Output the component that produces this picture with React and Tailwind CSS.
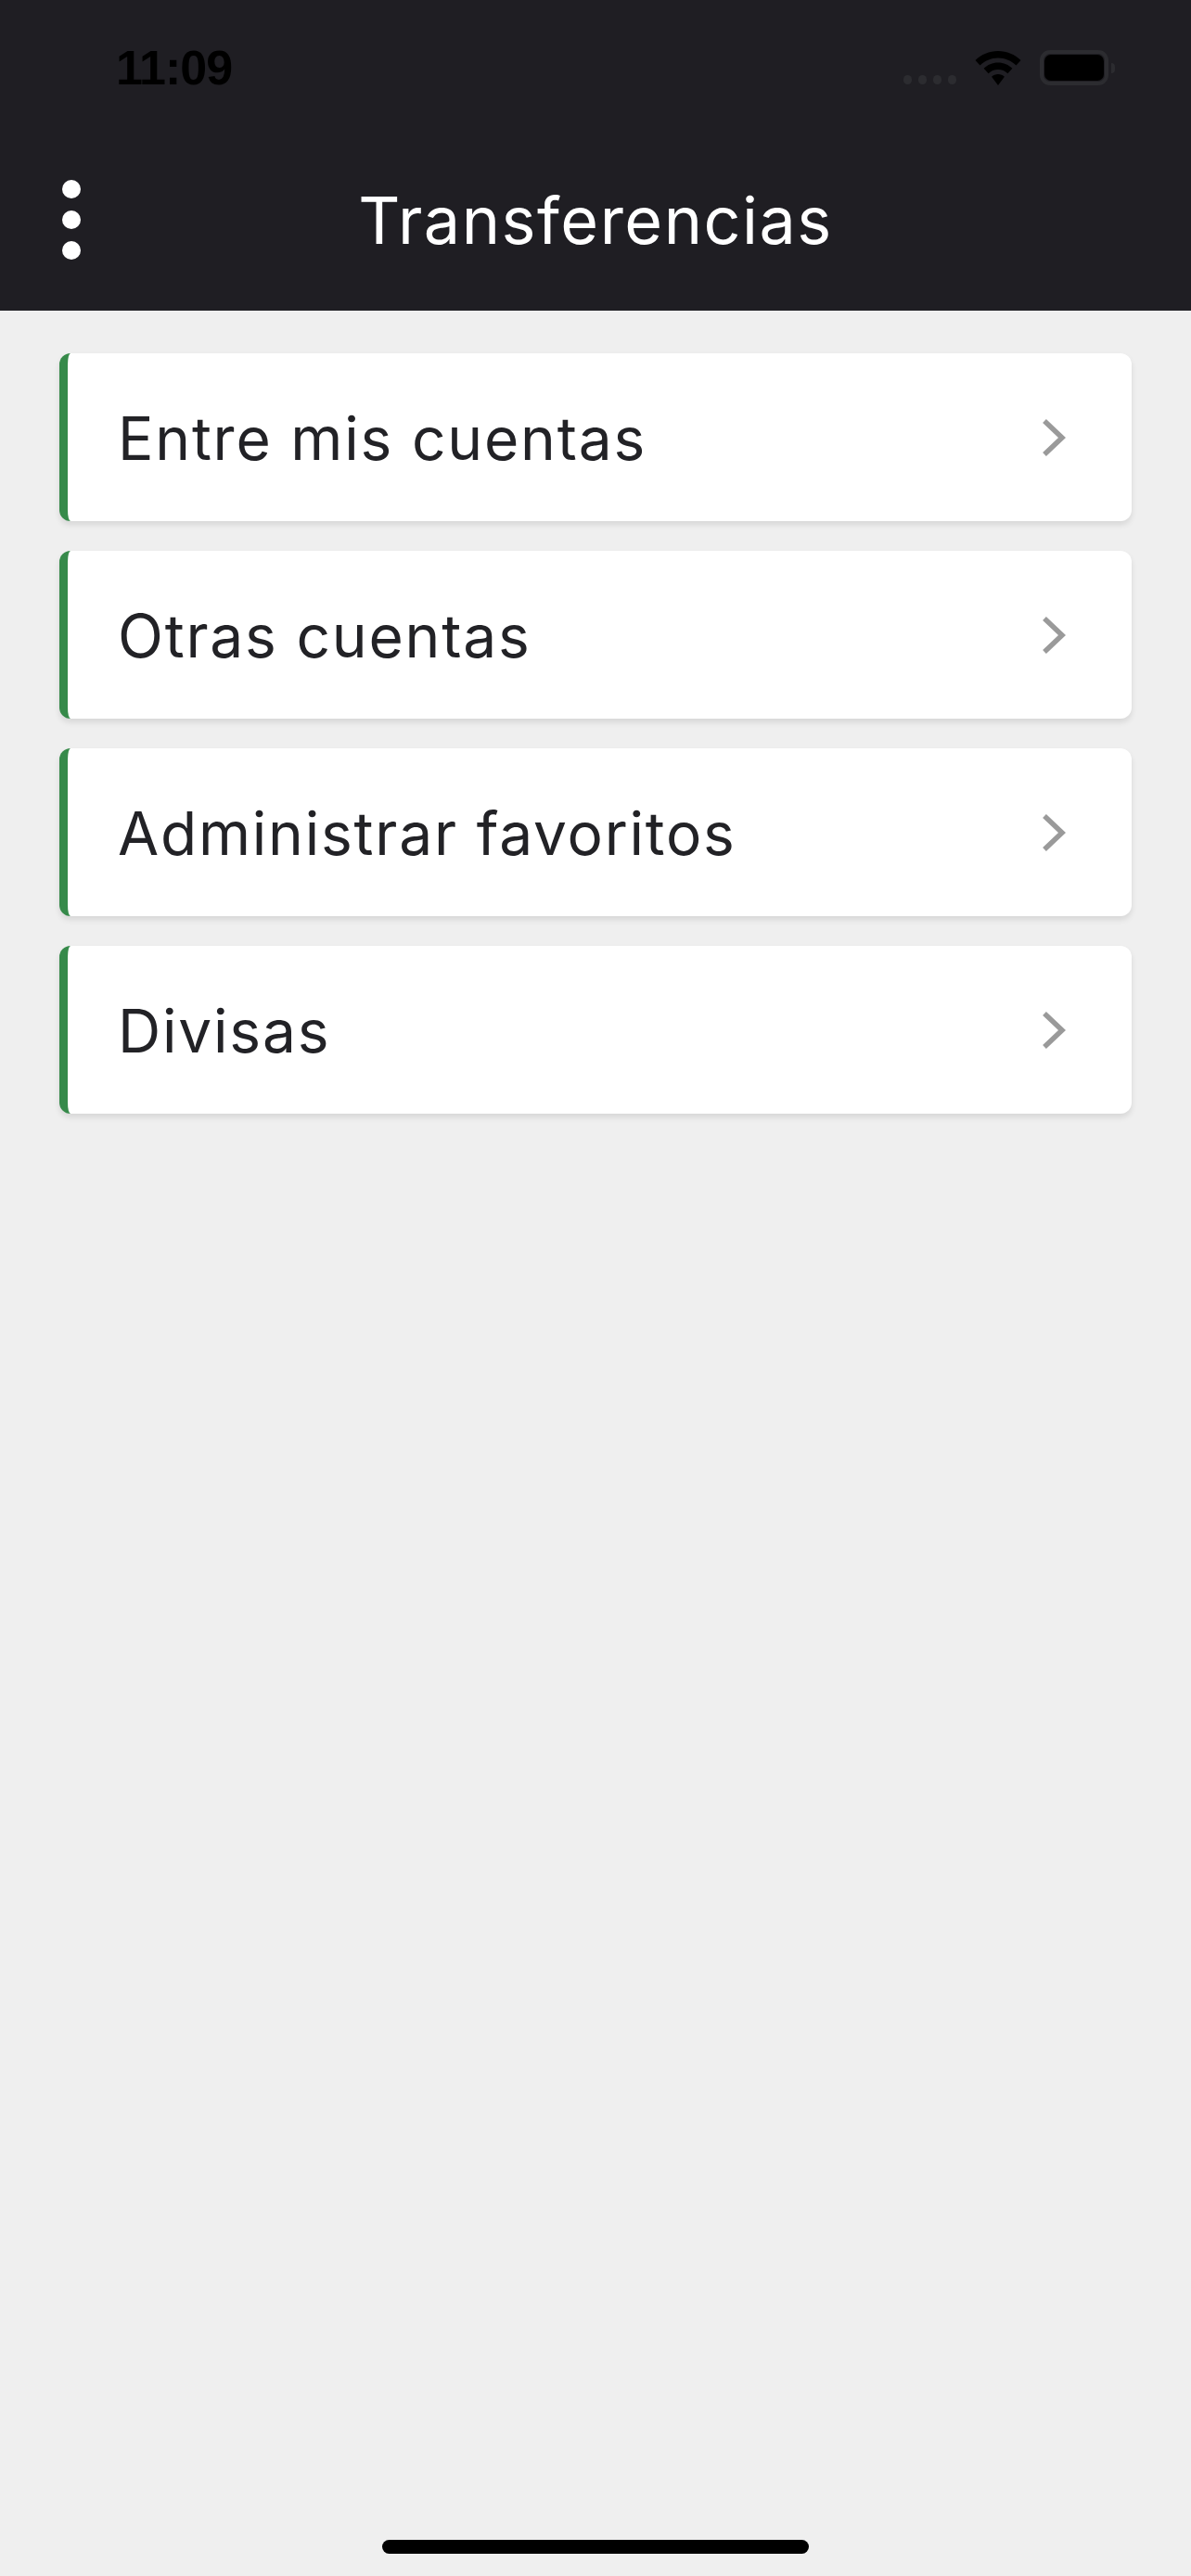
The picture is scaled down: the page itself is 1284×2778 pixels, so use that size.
const items = ["Entre mis cuentas", "Otras cuentas", "Administrar favoritos", "Divisas"];

function StatusBar() {
  return (
    <div className="h-[146px] flex items-center justify-between pl-[125px] pr-[82px]">
      <span className="text-[52px] font-bold tracking-[-1px] text-black font-['Liberation_Sans',Arial,sans-serif]">
        11:09
      </span>
      <div className="flex items-center gap-[20px]">
        {/* signal */}
        <div className="flex items-end gap-[7px] mt-[26px]">
          <div className="w-[9px] h-[10px] rounded-full bg-[#2c2c30]" />
          <div className="w-[9px] h-[10px] rounded-full bg-[#2c2c30]" />
          <div className="w-[9px] h-[10px] rounded-full bg-[#2c2c30]" />
          <div className="w-[9px] h-[10px] rounded-full bg-[#2c2c30]" />
        </div>
        {/* wifi */}
        <svg width="50" height="37" viewBox="0 0 50 37">
          <path d="M25 0 C15.5 0 7 3.8 0.5 10 L5.5 15.5 C10.6 10.7 17.5 7.6 25 7.6 C32.5 7.6 39.4 10.7 44.5 15.5 L49.5 10 C43 3.8 34.5 0 25 0 Z" fill="#000" />
          <path d="M25 12.5 C19 12.5 13.6 14.9 9.6 18.8 L14.6 24.2 C17.3 21.6 21 20 25 20 C29 20 32.7 21.6 35.4 24.2 L40.4 18.8 C36.4 14.9 31 12.5 25 12.5 Z" fill="#000" />
          <path d="M25 25 C22.3 25 19.9 26 18.1 27.7 L25 37 L31.9 27.7 C30.1 26 27.7 25 25 25 Z" fill="#000" />
        </svg>
        {/* battery */}
        <div className="flex items-center gap-[3px]">
          <div className="w-[74px] h-[38px] rounded-[11px] border-[4px] border-[#2c2c30] p-[1px]">
            <div className="w-full h-full rounded-[7px] bg-black" />
          </div>
          <div className="w-[4px] h-[11px] rounded-r-full bg-[#2c2c30]" />
        </div>
      </div>
    </div>
  );
}

function Chevron() {
  return (
    <svg width="26" height="42" viewBox="0 0 26 42" className="shrink-0">
      <path d="M3 3 L22 21 L3 39" fill="none" stroke="#9a9a9a" strokeWidth="5.5" />
    </svg>
  );
}

function Card({ label }) {
  return (
    <div className="h-[181px] bg-white rounded-[12px] border-l-[9px] border-[#368a4a] shadow-[0_4px_6px_rgba(0,0,0,0.10)] flex items-center justify-between pl-[54px] pr-[71px]">
      <span className="text-[64px] text-[#222226] tracking-[1.8px] mt-[2px]">
        {label}
      </span>
      <Chevron />
    </div>
  );
}

export default function App() {
  return (
    <div className="w-full min-h-[2778px] bg-[#efefef] flex flex-col font-['Inter',sans-serif]">
      <header className="h-[335px] bg-[#1f1e23] flex flex-col">
        <StatusBar />
        <div className="h-[189px] pb-[7px] grid grid-cols-[154px_1fr_154px] items-center">
          <div className="pl-[67px] flex flex-col gap-[13px]">
            <div className="w-[20px] h-[20px] rounded-full bg-white" />
            <div className="w-[20px] h-[20px] rounded-full bg-white" />
            <div className="w-[20px] h-[20px] rounded-full bg-white" />
          </div>
          <h1 className="text-center text-white text-[70px] font-normal tracking-[1.5px]">
            Transferencias
          </h1>
          <div />
        </div>
      </header>

      <main className="flex-1 flex flex-col gap-[32px] px-[64px] pt-[46px]">
        {items.map((label) => (
          <Card key={label} label={label} />
        ))}
      </main>

      <div className="h-[39px] flex justify-center">
        <div className="w-[460px] h-[15px] rounded-full bg-black" />
      </div>
    </div>
  );
}
